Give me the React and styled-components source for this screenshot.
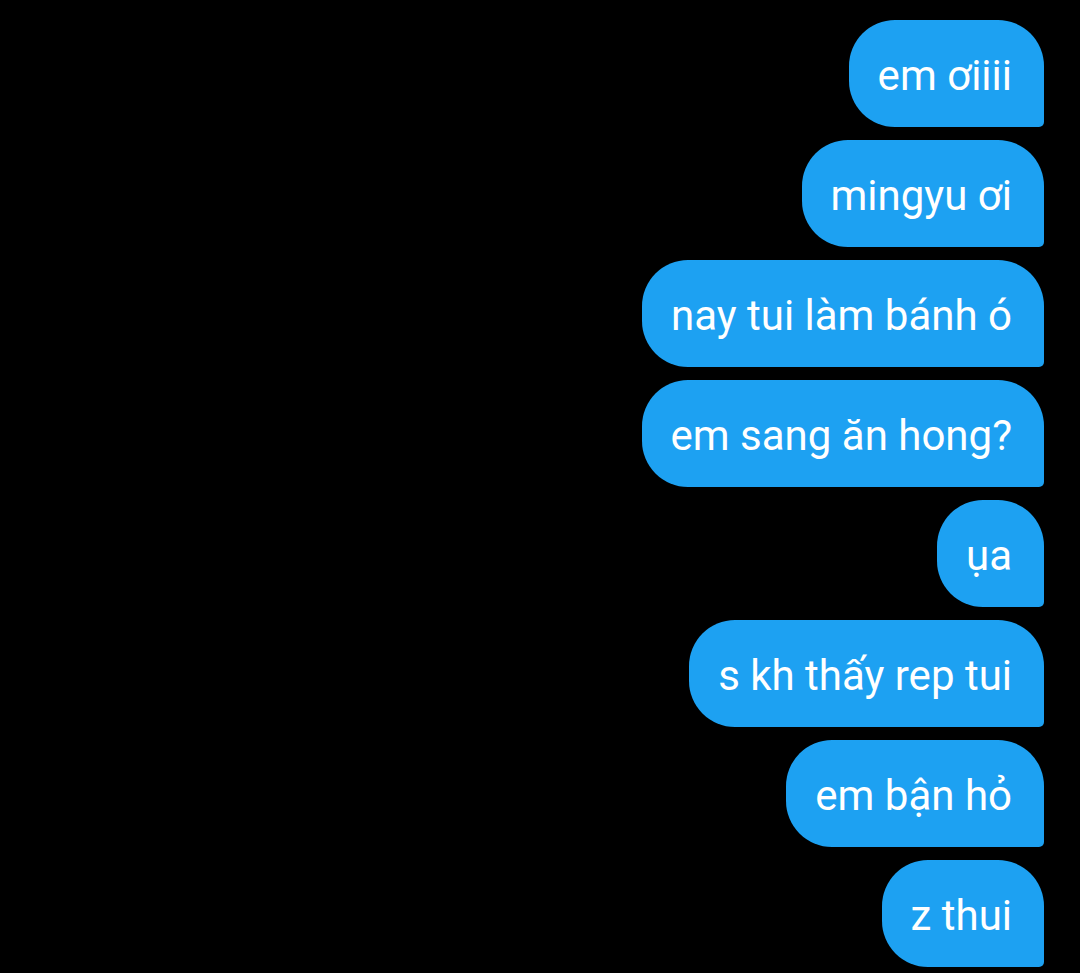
import React from 'react';
import styled, { createGlobalStyle } from 'styled-components';

const GlobalStyle = createGlobalStyle`
  html, body {
    margin: 0;
    padding: 0;
    background: #000;
  }
  body {
    font-family: Roboto, "Noto Sans", "Liberation Sans", sans-serif;
  }
`;

const Thread = styled.div`
  display: flex;
  flex-direction: column;
  align-items: flex-end;
  gap: 13px;
  padding: 20px 36px 0 0;
  min-height: 973px;
  box-sizing: border-box;
  background: #000;
`;

const Bubble = styled.div`
  display: flex;
  align-items: center;
  height: 107px;
  box-sizing: border-box;
  padding: 3px 32px 0 29px;
  background: #1da1f2;
  color: #fff;
  font-size: 42px;
  border-radius: 46px 46px 5px 46px;
  white-space: nowrap;
`;

const messages = [
  'em ơiiii',
  'mingyu ơi',
  'nay tui làm bánh ó',
  'em sang ăn hong?',
  'ụa',
  's kh thấy rep tui',
  'em bận hỏ',
  'z thui',
];

export default function App() {
  return (
    <>
      <GlobalStyle />
      <Thread>
        {messages.map((text, i) => (
          <Bubble key={i}>{text}</Bubble>
        ))}
      </Thread>
    </>
  );
}
